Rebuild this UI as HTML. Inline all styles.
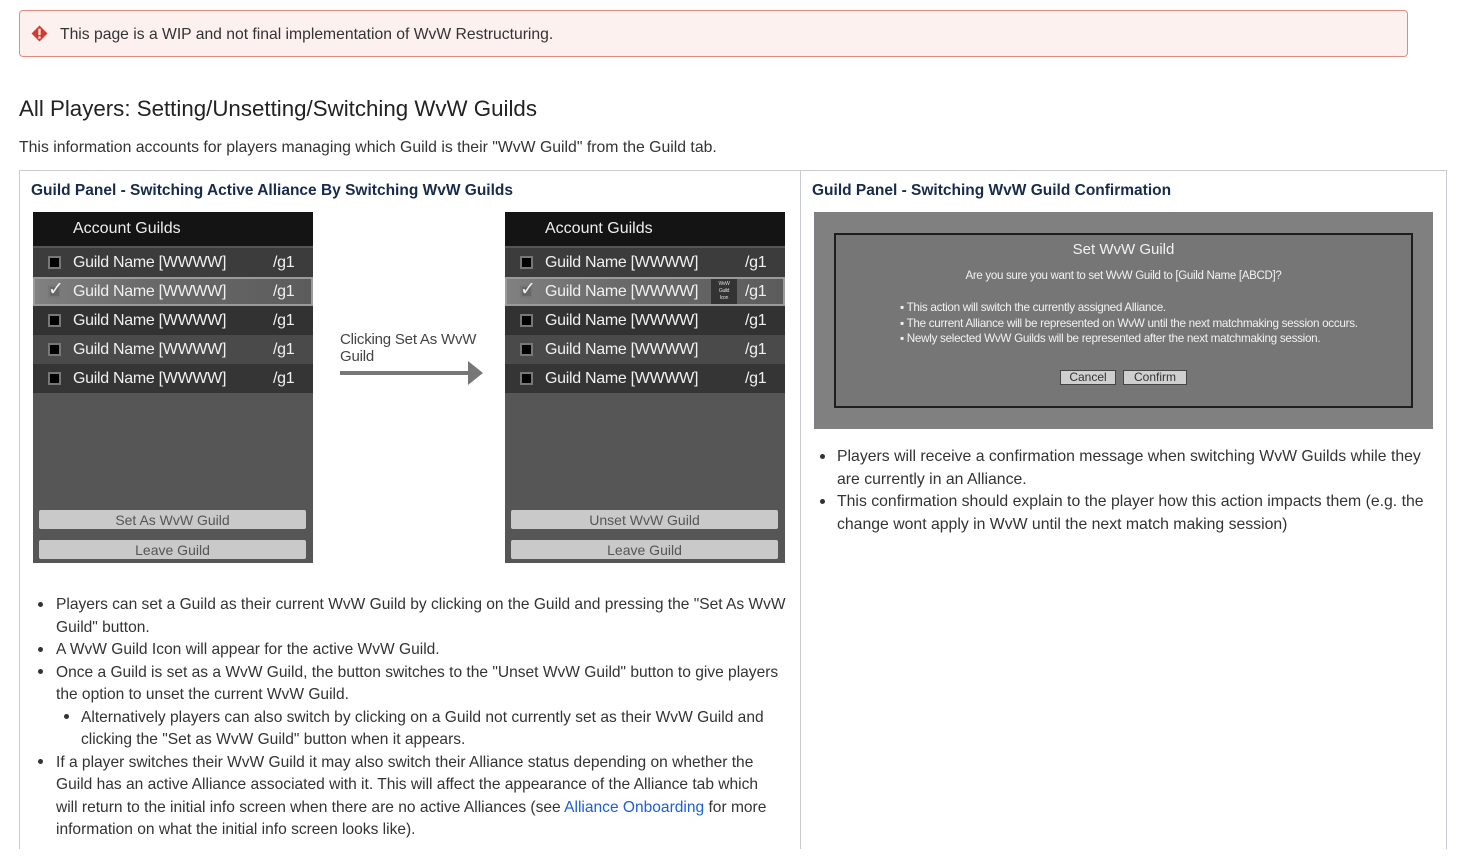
<!DOCTYPE html>
<html><head><meta charset="utf-8"><style>
*{margin:0;padding:0;box-sizing:border-box}
body{width:1465px;height:866px;background:#fff;font-family:"Liberation Sans",sans-serif;color:#333;position:relative;overflow:hidden}
.a{position:absolute;white-space:nowrap}
.banner{left:19px;top:10px;width:1389px;height:47px;background:#fdf1ef;border:1px solid #e48a80;border-radius:4px}
.t{color:#333}
.box{left:19px;top:170px;width:1428px;height:679px;border:1px solid #c8ccd2;border-bottom:none}
.div{left:800px;top:170px;width:1px;height:679px;background:#c8ccd2}
.h{font-weight:bold;font-size:15.5px;color:#172b4d}
.panel{width:280px;height:351px;background:#565656}
.ph{position:absolute;left:0;top:0;width:280px;height:34px;background:#141414;color:#eee;font-size:16px;padding:8px 0 0 40px}
.row{position:absolute;left:0;width:280px;height:29px;color:#f0f0f0;font-size:16px;letter-spacing:-0.3px}
.row .cb{position:absolute;left:15px;top:8px;width:13px;height:13px;background:#000;border:2px solid #777}
.row .n{position:absolute;left:40px;top:6px}
.row .g{position:absolute;left:240px;top:6px}
.btn{position:absolute;left:6px;width:267px;height:19px;background:#c9c9c9;border-radius:2px;color:#555;font-size:14px;text-align:center;line-height:20px}
.ul{font-size:15.55px;color:#333;line-height:22.5px}
.dot{position:absolute;width:5px;height:5px;border-radius:50%;background:#333}
</style></head><body>
<div class="a banner"></div>
<svg class="a" style="left:31px;top:25px" width="17" height="17" viewBox="0 0 16 16"><path d="M8 0.5L15.5 8 8 15.5 0.5 8Z" fill="#d23b2f"/><rect x="7" y="3.5" width="2" height="6" fill="#fff"/><rect x="7" y="10.8" width="2" height="2" fill="#fff"/></svg>
<div class="a t" style="left:60px;top:26px;font-size:15.7px">This page is a WIP and not final implementation of WvW Restructuring.</div>
<div class="a" style="left:19px;top:96px;font-size:22.3px;color:#222">All Players: Setting/Unsetting/Switching WvW Guilds</div>
<div class="a t" style="left:19px;top:139px;font-size:15.8px">This information accounts for players managing which Guild is their "WvW Guild" from the Guild tab.</div>
<div class="a box"></div><div class="a div"></div>
<div class="a h" style="left:31px;top:182px">Guild Panel - Switching Active Alliance By Switching WvW Guilds</div>
<div class="a h" style="left:812px;top:182px">Guild Panel - Switching WvW Guild Confirmation</div>

<!-- left panel -->
<div class="a panel" style="left:33px;top:212px">
<div class="ph">Account Guilds</div>
<div class="row" style="top:36px;background:#3c3c3c"><div class="cb"></div><span class="n">Guild Name [WWWW]</span><span class="g">/g1</span></div>
<div class="row" style="top:65px;background:linear-gradient(90deg,#808080,#6a6a6a 40%,#5c5c5c);border:2px solid #9a9a9a"><div class="cb" style="background:#666;left:13px;top:6px"></div><span style="position:absolute;left:13px;top:-1px;font-size:19px">✓</span><span class="n" style="left:38px;top:4px">Guild Name [WWWW]</span><span class="g" style="left:238px;top:4px">/g1</span></div>
<div class="row" style="top:94px;background:#323232"><div class="cb"></div><span class="n">Guild Name [WWWW]</span><span class="g">/g1</span></div>
<div class="row" style="top:123px;background:#4a4a4a"><div class="cb"></div><span class="n">Guild Name [WWWW]</span><span class="g">/g1</span></div>
<div class="row" style="top:152px;background:#353535"><div class="cb"></div><span class="n">Guild Name [WWWW]</span><span class="g">/g1</span></div>
<div class="btn" style="top:298px">Set As WvW Guild</div>
<div class="btn" style="top:328px">Leave Guild</div>
</div>
<div class="a" style="left:340px;top:331px;font-size:15px;color:#444;line-height:17px;letter-spacing:-0.2px">Clicking Set As WvW<br>Guild</div>
<div class="a" style="left:340px;top:371px;width:130px;height:4px;background:#777"></div>
<svg class="a" style="left:468px;top:361px" width="15" height="24"><path d="M0 0L15 12 0 24Z" fill="#777"/></svg>

<!-- right panel -->
<div class="a panel" style="left:505px;top:212px">
<div class="ph">Account Guilds</div>
<div class="row" style="top:36px;background:#3c3c3c"><div class="cb"></div><span class="n">Guild Name [WWWW]</span><span class="g">/g1</span></div>
<div class="row" style="top:65px;background:linear-gradient(90deg,#808080,#6a6a6a 40%,#5c5c5c);border:2px solid #9a9a9a"><div class="cb" style="background:#666;left:13px;top:6px"></div><span style="position:absolute;left:13px;top:-1px;font-size:19px">✓</span><span class="n" style="left:38px;top:4px">Guild Name [WWWW]</span><div style="position:absolute;left:204px;top:0;width:26px;height:25px;background:#333;font-size:5px;color:#ddd;text-align:center;line-height:7px;padding-top:2px">WvW<br>Guild<br>Icon</div><span class="g" style="left:238px;top:4px">/g1</span></div>
<div class="row" style="top:94px;background:#323232"><div class="cb"></div><span class="n">Guild Name [WWWW]</span><span class="g">/g1</span></div>
<div class="row" style="top:123px;background:#4a4a4a"><div class="cb"></div><span class="n">Guild Name [WWWW]</span><span class="g">/g1</span></div>
<div class="row" style="top:152px;background:#353535"><div class="cb"></div><span class="n">Guild Name [WWWW]</span><span class="g">/g1</span></div>
<div class="btn" style="top:298px">Unset WvW Guild</div>
<div class="btn" style="top:328px">Leave Guild</div>
</div>

<!-- dialog -->
<div class="a" style="left:814px;top:212px;width:619px;height:217px;background:#808080"></div>
<div class="a" style="left:834px;top:233px;width:579px;height:175px;background:#767676;border:2px solid #1e1e1e"></div>
<div class="a" style="left:834px;top:241px;width:579px;text-align:center;color:#f2f2f2;font-size:15px">Set WvW Guild</div>
<div class="a" style="left:834px;top:270px;width:579px;text-align:center;color:#f2f2f2;font-size:11.5px;letter-spacing:-0.3px">Are you sure you want to set WvW Guild to [Guild Name [ABCD]?</div>
<div class="a" style="left:900px;top:300px;color:#f2f2f2;font-size:11.7px;line-height:15.5px;letter-spacing:-0.3px">▪ This action will switch the currently assigned Alliance.<br>▪ The current Alliance will be represented on WvW until the next matchmaking session occurs.<br>▪ Newly selected WvW Guilds will be represented after the next matchmaking session.</div>
<div class="a" style="left:1060px;top:370px;width:56px;height:15px;background:#cfcfcf;border:1px solid #444;font-size:12px;text-align:center;line-height:13px;color:#333">Cancel</div>
<div class="a" style="left:1123px;top:370px;width:64px;height:15px;background:#cfcfcf;border:1px solid #444;font-size:12px;text-align:center;line-height:13px;color:#333">Confirm</div>

<!-- right bullets -->
<div class="a dot" style="left:820px;top:454px"></div>
<div class="a dot" style="left:820px;top:499px"></div>
<div class="a ul" style="left:837px;top:446px;font-size:15.8px">Players will receive a confirmation message when switching WvW Guilds while they<br>are currently in an Alliance.<br>This confirmation should explain to the player how this action impacts them (e.g. the<br>change wont apply in WvW until the next match making session)</div>

<!-- left bullets -->
<div class="a dot" style="left:38px;top:602px"></div>
<div class="a dot" style="left:38px;top:647px"></div>
<div class="a dot" style="left:38px;top:669px"></div>
<div class="a dot" style="left:64px;top:714px"></div>
<div class="a dot" style="left:38px;top:759px"></div>
<div class="a ul" style="left:56px;top:594px">Players can set a Guild as their current WvW Guild by clicking on the Guild and pressing the "Set As WvW<br>Guild" button.<br>A WvW Guild Icon will appear for the active WvW Guild.<br>Once a Guild is set as a WvW Guild, the button switches to the "Unset WvW Guild" button to give players<br>the option to unset the current WvW Guild.<br><span style="padding-left:25px">Alternatively players can also switch by clicking on a Guild not currently set as their WvW Guild and</span><br><span style="padding-left:25px">clicking the "Set as WvW Guild" button when it appears.</span><br>If a player switches their WvW Guild it may also switch their Alliance status depending on whether the<br>Guild has an active Alliance associated with it. This will affect the appearance of the Alliance tab which<br>will return to the initial info screen when there are no active Alliances (see <span style="color:#1d5fd6">Alliance Onboarding</span> for more<br>information on what the initial info screen looks like).</div>
</body></html>
